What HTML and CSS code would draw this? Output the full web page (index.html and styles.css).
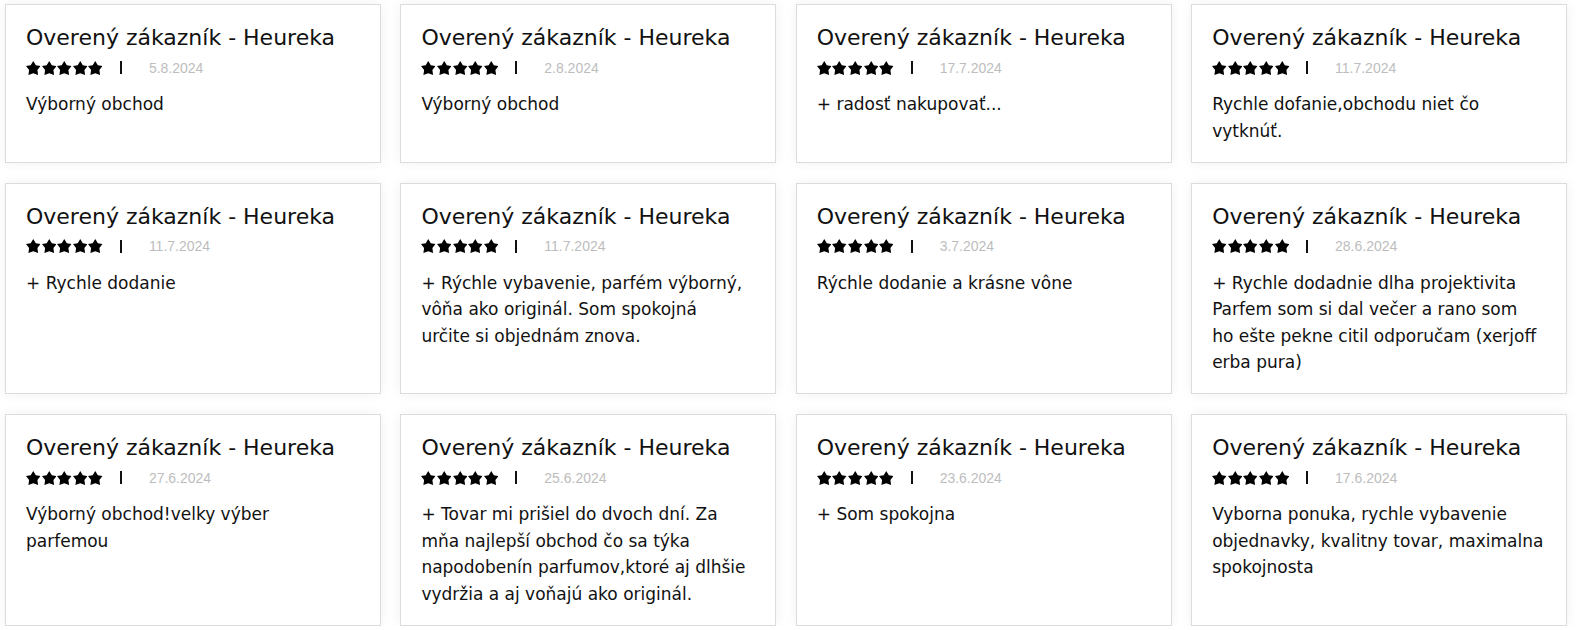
FILE: index.html
```html
<!DOCTYPE html>
<html lang="sk">
<head>
<meta charset="utf-8">
<title>Recenzie</title>
<link rel="stylesheet" href="styles.css">
</head>
<body>
<svg class="defs" width="0" height="0" aria-hidden="true">
  <symbol id="star" viewBox="26 0 524 506">
    <polygon points="288,0 381,150 550,180 438,329 463,506 288,439 113,506 138,329 26,180 195,150"/>
  </symbol>
</svg>
<div class="reviews">
  <div class="review">
    <h3 class="review-author">Overený zákazník - Heureka</h3>
    <div class="review-meta"><span class="stars"><svg><use href="#star"/></svg><svg><use href="#star"/></svg><svg><use href="#star"/></svg><svg><use href="#star"/></svg><svg><use href="#star"/></svg></span><span class="sep"></span><span class="date">5.8.2024</span></div>
    <p class="review-text">Výborný obchod</p>
  </div>
  <div class="review">
    <h3 class="review-author">Overený zákazník - Heureka</h3>
    <div class="review-meta"><span class="stars"><svg><use href="#star"/></svg><svg><use href="#star"/></svg><svg><use href="#star"/></svg><svg><use href="#star"/></svg><svg><use href="#star"/></svg></span><span class="sep"></span><span class="date">2.8.2024</span></div>
    <p class="review-text">Výborný obchod</p>
  </div>
  <div class="review">
    <h3 class="review-author">Overený zákazník - Heureka</h3>
    <div class="review-meta"><span class="stars"><svg><use href="#star"/></svg><svg><use href="#star"/></svg><svg><use href="#star"/></svg><svg><use href="#star"/></svg><svg><use href="#star"/></svg></span><span class="sep"></span><span class="date">17.7.2024</span></div>
    <p class="review-text">+ radosť nakupovať...</p>
  </div>
  <div class="review">
    <h3 class="review-author">Overený zákazník - Heureka</h3>
    <div class="review-meta"><span class="stars"><svg><use href="#star"/></svg><svg><use href="#star"/></svg><svg><use href="#star"/></svg><svg><use href="#star"/></svg><svg><use href="#star"/></svg></span><span class="sep"></span><span class="date">11.7.2024</span></div>
    <p class="review-text">Rychle dofanie,obchodu niet čo<br>vytknúť.</p>
  </div>
  <div class="review">
    <h3 class="review-author">Overený zákazník - Heureka</h3>
    <div class="review-meta"><span class="stars"><svg><use href="#star"/></svg><svg><use href="#star"/></svg><svg><use href="#star"/></svg><svg><use href="#star"/></svg><svg><use href="#star"/></svg></span><span class="sep"></span><span class="date">11.7.2024</span></div>
    <p class="review-text">+ Rychle dodanie</p>
  </div>
  <div class="review">
    <h3 class="review-author">Overený zákazník - Heureka</h3>
    <div class="review-meta"><span class="stars"><svg><use href="#star"/></svg><svg><use href="#star"/></svg><svg><use href="#star"/></svg><svg><use href="#star"/></svg><svg><use href="#star"/></svg></span><span class="sep"></span><span class="date">11.7.2024</span></div>
    <p class="review-text">+ Rýchle vybavenie, parfém výborný,<br>vôňa ako originál. Som spokojná<br>určite si objednám znova.</p>
  </div>
  <div class="review">
    <h3 class="review-author">Overený zákazník - Heureka</h3>
    <div class="review-meta"><span class="stars"><svg><use href="#star"/></svg><svg><use href="#star"/></svg><svg><use href="#star"/></svg><svg><use href="#star"/></svg><svg><use href="#star"/></svg></span><span class="sep"></span><span class="date">3.7.2024</span></div>
    <p class="review-text">Rýchle dodanie a krásne vône</p>
  </div>
  <div class="review">
    <h3 class="review-author">Overený zákazník - Heureka</h3>
    <div class="review-meta"><span class="stars"><svg><use href="#star"/></svg><svg><use href="#star"/></svg><svg><use href="#star"/></svg><svg><use href="#star"/></svg><svg><use href="#star"/></svg></span><span class="sep"></span><span class="date">28.6.2024</span></div>
    <p class="review-text">+ Rychle dodadnie dlha projektivita<br>Parfem som si dal večer a rano som<br>ho ešte pekne citil odporučam (xerjoff<br>erba pura)</p>
  </div>
  <div class="review">
    <h3 class="review-author">Overený zákazník - Heureka</h3>
    <div class="review-meta"><span class="stars"><svg><use href="#star"/></svg><svg><use href="#star"/></svg><svg><use href="#star"/></svg><svg><use href="#star"/></svg><svg><use href="#star"/></svg></span><span class="sep"></span><span class="date">27.6.2024</span></div>
    <p class="review-text">Výborný obchod!velky výber<br>parfemou</p>
  </div>
  <div class="review">
    <h3 class="review-author">Overený zákazník - Heureka</h3>
    <div class="review-meta"><span class="stars"><svg><use href="#star"/></svg><svg><use href="#star"/></svg><svg><use href="#star"/></svg><svg><use href="#star"/></svg><svg><use href="#star"/></svg></span><span class="sep"></span><span class="date">25.6.2024</span></div>
    <p class="review-text">+ Tovar mi prišiel do dvoch dní. Za<br>mňa najlepší obchod čo sa týka<br>napodobenín parfumov,ktoré aj dlhšie<br>vydržia a aj voňajú ako originál.</p>
  </div>
  <div class="review">
    <h3 class="review-author">Overený zákazník - Heureka</h3>
    <div class="review-meta"><span class="stars"><svg><use href="#star"/></svg><svg><use href="#star"/></svg><svg><use href="#star"/></svg><svg><use href="#star"/></svg><svg><use href="#star"/></svg></span><span class="sep"></span><span class="date">23.6.2024</span></div>
    <p class="review-text">+ Som spokojna</p>
  </div>
  <div class="review">
    <h3 class="review-author">Overený zákazník - Heureka</h3>
    <div class="review-meta"><span class="stars"><svg><use href="#star"/></svg><svg><use href="#star"/></svg><svg><use href="#star"/></svg><svg><use href="#star"/></svg><svg><use href="#star"/></svg></span><span class="sep"></span><span class="date">17.6.2024</span></div>
    <p class="review-text">Vyborna ponuka, rychle vybavenie<br>objednavky, kvalitny tovar, maximalna<br>spokojnosta</p>
  </div>
</div>
</body>
</html>
```

FILE: styles.css
```css
html, body {
  margin: 0;
  padding: 0;
  background: #fff;
}

.defs {
  position: absolute;
  width: 0;
  height: 0;
  overflow: hidden;
}

.reviews {
  box-sizing: border-box;
  width: 1567px;
  padding: 4px 0 0 5px;
  display: grid;
  grid-template-columns: repeat(4, 1fr);
  column-gap: 19.5px;
  row-gap: 20px;
  font-family: "DejaVu Sans", "Noto Sans", sans-serif;
  color: #111;
}

.review {
  background: #fff;
  border: 1px solid #dcdcdc;
  box-shadow: 0 0 12px rgba(0, 0, 0, 0.06);
  padding: 20px 12px 17.5px 20px;
  display: flex;
  flex-direction: column;
}

.review-author {
  margin: 0;
  font-size: 22px;
  line-height: 26px;
  font-weight: 400;
  color: #111;
  white-space: nowrap;
}

.review-meta {
  margin-top: 8px;
  height: 17px;
  display: flex;
  align-items: center;
}

.stars {
  display: flex;
  gap: 1.1px;
}

.stars svg {
  width: 14.5px;
  height: 14px;
  fill: #000;
  display: block;
}

.sep {
  width: 2px;
  height: 13px;
  background: #111;
  margin-left: 17px;
}

.date {
  margin-left: 27px;
  font-family: "Liberation Sans", Arial, sans-serif;
  font-size: 14px;
  color: #bdbdbd;
}

.review-text {
  margin: 15px 0 0 0;
  font-size: 17px;
  line-height: 26.5px;
  color: #111;
}
```
